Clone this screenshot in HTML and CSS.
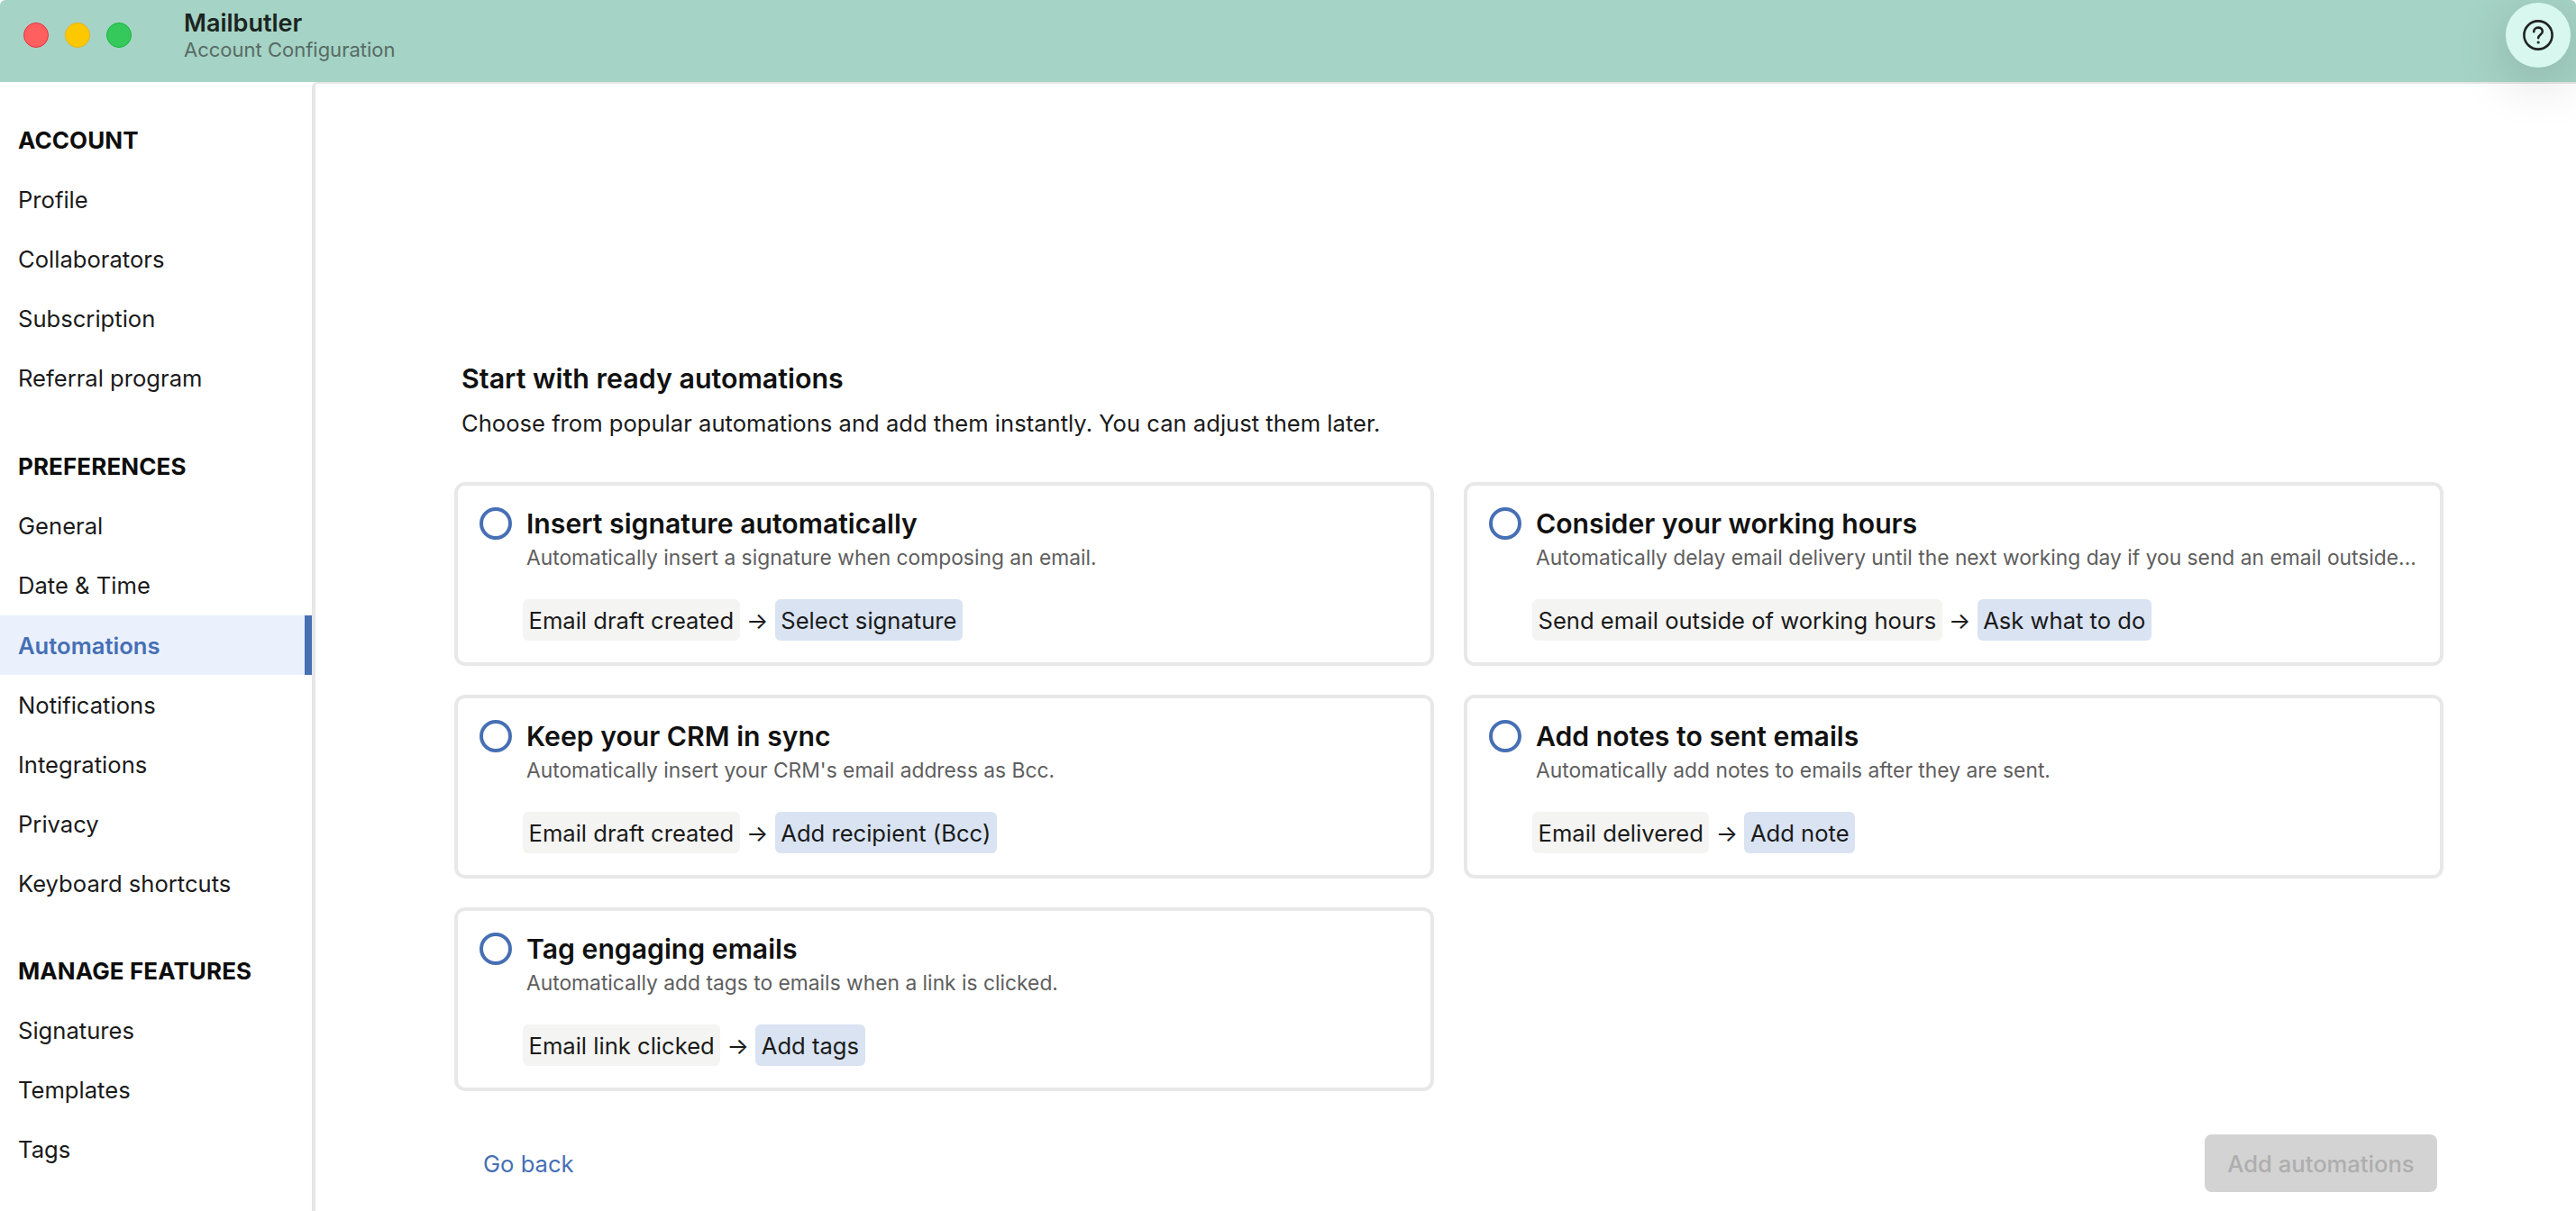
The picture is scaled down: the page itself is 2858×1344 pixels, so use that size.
FILE: index.html
```html
<!DOCTYPE html>
<html lang="en">
<head>
<meta charset="utf-8">
<title>Mailbutler - Account Configuration</title>
<link rel="stylesheet" href="styles.css">
</head>
<body>
<div class="window">
  <header class="titlebar">
    <div class="lights">
      <span class="light red"></span>
      <span class="light yellow"></span>
      <span class="light green"></span>
    </div>
    <div class="app-title">
      <div class="app-name">Mailbutler</div>
      <div class="app-sub">Account Configuration</div>
    </div>
  </header>
  <button class="help" aria-label="Help">
    <svg width="36" height="36" viewBox="0 0 36 36" fill="none" stroke="#222" stroke-width="2.6" stroke-linecap="round">
      <circle cx="18" cy="18" r="15.6"/>
      <path d="M13.2 14.2c0-2.8 2.1-4.6 4.8-4.6s4.8 1.7 4.8 4.3c0 3.5-4.6 3.7-4.6 7.2"/>
      <circle cx="18.2" cy="26" r=".6" fill="#222" stroke-width="2"/>
    </svg>
  </button>
  <div class="body">
    <nav class="sidebar">
      <h2 class="nav-head">ACCOUNT</h2>
      <a class="nav-item">Profile</a>
      <a class="nav-item">Collaborators</a>
      <a class="nav-item">Subscription</a>
      <a class="nav-item">Referral program</a>
      <h2 class="nav-head spaced">PREFERENCES</h2>
      <a class="nav-item">General</a>
      <a class="nav-item">Date &amp; Time</a>
      <a class="nav-item active">Automations</a>
      <a class="nav-item">Notifications</a>
      <a class="nav-item">Integrations</a>
      <a class="nav-item">Privacy</a>
      <a class="nav-item">Keyboard shortcuts</a>
      <h2 class="nav-head spaced last">MANAGE FEATURES</h2>
      <a class="nav-item">Signatures</a>
      <a class="nav-item">Templates</a>
      <a class="nav-item">Tags</a>
    </nav>
    <main class="main">
      <h1 class="title">Start with ready automations</h1>
      <p class="subtitle">Choose from popular automations and add them instantly. You can adjust them later.</p>
      <div class="grid">
        <article class="card">
          <span class="radio"></span>
          <div class="card-body">
            <h3 class="card-title">Insert signature automatically</h3>
            <p class="card-desc">Automatically insert a signature when composing an email.</p>
            <div class="flow"><span class="chip">Email draft created</span><span class="arrow">→</span><span class="chip action">Select signature</span></div>
          </div>
        </article>
        <article class="card">
          <span class="radio"></span>
          <div class="card-body">
            <h3 class="card-title">Consider your working hours</h3>
            <p class="card-desc">Automatically delay email delivery until the next working day if you send an email outside...</p>
            <div class="flow"><span class="chip">Send email outside of working hours</span><span class="arrow">→</span><span class="chip action">Ask what to do</span></div>
          </div>
        </article>
        <article class="card">
          <span class="radio"></span>
          <div class="card-body">
            <h3 class="card-title">Keep your CRM in sync</h3>
            <p class="card-desc">Automatically insert your CRM's email address as Bcc.</p>
            <div class="flow"><span class="chip">Email draft created</span><span class="arrow">→</span><span class="chip action">Add recipient (Bcc)</span></div>
          </div>
        </article>
        <article class="card">
          <span class="radio"></span>
          <div class="card-body">
            <h3 class="card-title">Add notes to sent emails</h3>
            <p class="card-desc">Automatically add notes to emails after they are sent.</p>
            <div class="flow"><span class="chip">Email delivered</span><span class="arrow">→</span><span class="chip action">Add note</span></div>
          </div>
        </article>
        <article class="card">
          <span class="radio"></span>
          <div class="card-body">
            <h3 class="card-title">Tag engaging emails</h3>
            <p class="card-desc">Automatically add tags to emails when a link is clicked.</p>
            <div class="flow"><span class="chip">Email link clicked</span><span class="arrow">→</span><span class="chip action">Add tags</span></div>
          </div>
        </article>
      </div>
      <div class="footer">
        <a class="back">Go back</a>
        <button class="add" disabled>Add automations</button>
      </div>
    </main>
  </div>
</div>
</body>
</html>
```
FILE: styles.css
```css
* { box-sizing: border-box; }
html, body { margin: 0; height: 100%; overflow: hidden; background: #fff; }
body { font-family: Inter, "Noto Sans", sans-serif; color: #161616; }
.window { position: relative; height: 1344px; display: flex; flex-direction: column; overflow: hidden; border-radius: 6px 6px 0 0; }
.titlebar { height: 91px; flex: none; background: #a5d3c5; display: flex; align-items: flex-start; }
.lights { display: flex; gap: 18px; padding: 25px 0 0 26px; width: 204px; }
.light { width: 28px; height: 28px; border-radius: 50%; border: 1px solid; }
.red { background: #ff5f5f; border-color: #ee2f3f; }
.yellow { background: #fdc800; border-color: #e9b41a; }
.green { background: #35c95b; border-color: #12b83a; }
.app-title { padding-top: 12px; }
.app-name { font-size: 27px; line-height: 28px; font-weight: 600; color: #1b2421; }
.app-sub { font-size: 22px; line-height: 30px; color: #576b64; }
.help { position: absolute; top: 3px; right: 6px; width: 72px; height: 72px; padding: 0; border: 0; border-radius: 50%; background: #d8f8ef; display: flex; align-items: center; justify-content: center; box-shadow: 0 16px 60px rgba(0,0,0,.16); }
.body { flex: 1; display: flex; min-height: 0; }
.sidebar { width: 346px; flex: none; padding-top: 31px; display: flex; flex-direction: column; }
.nav-head { margin: 0; height: 66px; flex: none; padding-left: 20px; display: flex; align-items: center; font-size: 26px; font-weight: 700; color: #0d0d0d; letter-spacing: .1px; }
.nav-head.spaced { margin-top: 32px; }
.nav-head.last { margin-top: 31px; }
.nav-item { height: 66px; flex: none; padding-left: 20px; display: flex; align-items: center; font-size: 25.6px; color: #1a1a1a; }
.nav-item.active { margin-top: 1px; background: #eaf1fd; color: #466fb4; font-weight: 600; border-right: 8px solid #466fb4; }
.main { flex: 1; min-width: 0; border-left: 4px solid #e6e6e6; border-top: 2px solid #e6e6e6; border-top-left-radius: 6px; padding: 308px 146px 0 162px; }
.title { margin: 0; font-size: 30.4px; line-height: 38px; font-weight: 600; color: #111; }
.subtitle { margin: 13px 0 0; font-size: 25.6px; line-height: 36px; color: #1a1a1a; }
.grid { margin: 47px 0 0 -8px; display: grid; grid-template-columns: 1087px 1087px; gap: 32px 33px; }
.card { height: 204px; border: 4px solid #e8e8e8; border-radius: 12px; padding: 24px 16px 0 24px; display: flex; gap: 16px; }
.radio { width: 36px; height: 36px; flex: none; border: 4px solid #466fb4; border-radius: 50%; }
.card-body { min-width: 0; flex: 1; }
.card-title { margin: 0; font-size: 30.2px; line-height: 36px; font-weight: 600; color: #111; }
.card-desc { margin: 4px 0 0; font-size: 22.8px; line-height: 32px; color: #5e5e5e; white-space: nowrap; }
.flow { margin: 30px 0 0 -4px; display: flex; align-items: center; }
.chip { height: 46px; padding: 0 6.5px; display: flex; align-items: center; background: #f4f4f2; border-radius: 6px; font-size: 25.6px; color: #1a1a1a; }
.chip.action { background: #d9e3f2; }
.arrow { width: 39px; flex: none; text-align: center; font-size: 25.6px; color: #1a1a1a; }
.footer { margin-top: 48px; padding-left: 24px; padding-right: 8px; display: flex; align-items: center; justify-content: space-between; }
.back { font-size: 25.6px; color: #466fb4; }
.add { width: 258px; height: 64px; padding: 0; border: 0; border-radius: 8px; background: #d3d3d3; color: #aeaeae; font: 500 25.6px Inter, sans-serif; }
```
